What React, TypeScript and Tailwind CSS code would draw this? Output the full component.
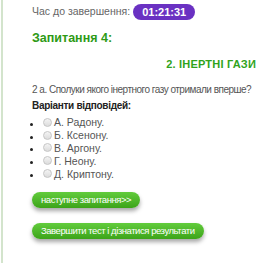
import React from 'react';

const options = ['А. Радону.', 'Б. Ксенону.', 'В. Аргону.', 'Г. Неону.', 'Д. Криптону.'];

export default function App() {
  return (
    <div className="w-[280px] h-[263px] bg-white overflow-hidden font-['Liberation_Sans',Arial,sans-serif]">
      <div className="ml-[1px] h-full border-l-[2px] border-[#d3e4cc] pl-[29px] pr-[24px]">
        {/* Timer */}
        <div className="flex items-center gap-[3px] pt-[4px] h-[20px]">
          <span className="text-[10.5px] text-[#666]">Час до завершення:</span>
          <span className="h-[16px] px-[9px] rounded-full bg-[#6a31c2] text-white text-[11px] font-bold leading-[16px]">
            01:21:31
          </span>
        </div>

        <h2 className="mt-[9px] text-[12.5px] font-bold text-[#2e9a16] leading-[18px]">Запитання 4:</h2>

        <div className="mt-[9px] text-right text-[11px] font-bold text-[#30a31c] leading-[16px] tracking-[0.2px]">
          2. ІНЕРТНІ ГАЗИ
        </div>

        <p className="mt-[11px] text-[10px] text-[#555] leading-[14px] whitespace-nowrap tracking-[-0.5px]">
          2 а. Сполуки якого інертного газу отримали вперше?
        </p>

        <div className="mt-[2px] text-[10px] font-bold text-[#222] leading-[14px] tracking-[-0.3px]">Варіанти відповідей:</div>

        <ul className="mt-[3px] list-disc pl-[11px] text-[10.5px] text-[#555] leading-[12.25px]">
          {options.map((o) => (
            <li key={o} className="marker:text-[#222]">
              <span className="inline-flex items-center gap-[2px]">
                <span className="w-[9px] h-[9px] rounded-full border border-[#c6c6c6] bg-gradient-to-b from-[#f4f4f4] to-[#dcdcdc]" />
                {o}
              </span>
            </li>
          ))}
        </ul>

        <div className="mt-[12px] flex flex-col items-start gap-[15px]">
          <button
            type="button"
            className="h-[16px] px-[9px] rounded-full bg-gradient-to-b from-[#62cc3c] to-[#3ca418] text-white text-[9.5px] leading-[16px] tracking-[-0.45px] shadow-[0_3px_4px_rgba(0,0,0,0.35)]"
          >
            наступне запитання&gt;&gt;
          </button>
          <button
            type="button"
            className="h-[16px] px-[9px] rounded-full bg-gradient-to-b from-[#62cc3c] to-[#3ca418] text-white text-[9.5px] leading-[16px] tracking-[-0.45px] shadow-[0_3px_4px_rgba(0,0,0,0.35)]"
          >
            Завершити тест і дізнатися результати
          </button>
        </div>
      </div>
    </div>
  );
}
